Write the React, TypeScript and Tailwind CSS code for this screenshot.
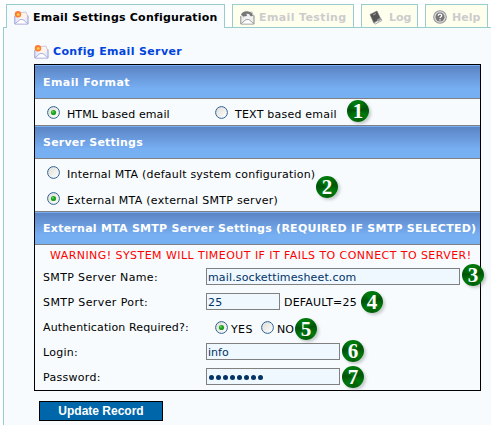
import type { ReactNode } from 'react';

function MailIcon({ muted = false }: { muted?: boolean }) {
  const line = muted ? '#8c8c8c' : '#9a9cd0';
  return (
    <svg width="15" height="15" viewBox="0 0 15 15" className="block shrink-0">
      <path d="M3.500 3l8.500-1 1.500 4v5h-11z" fill={muted ? '#f2f2f2' : '#fdf3ea'} stroke={muted ? '#b5b5b5' : '#c9bcd2'} strokeWidth=".8" />
      <path d="M.8 6.500l5.700 3.800h2L14.200 6v8H1.200z" fill={muted ? '#eeeeee' : '#e6ebfd'} />
      <path d="M.8 6v8h13.200V5.500" fill="none" stroke={line} />
      <path d="M1.200 13.600l4.800-4h3l4.600 4" fill="#ffffff" stroke={line} strokeWidth=".8" />
      {muted ? (
        <path d="M1 5C1.500 1 8 0 11.500 2.800L13 6l-2.500.3L9 4 6.500 3.800 7 6 3.500 6.500z" fill="#777777" />
      ) : (
        <>
          <circle cx="4" cy="4.200" r="3.200" fill="#ff7a33" />
          <circle cx="4.200" cy="4.500" r="1.500" fill="#ffc84a" />
        </>
      )}
    </svg>
  );
}

function BookIcon() {
  return (
    <svg width="14" height="15" viewBox="0 0 14 15" className="block shrink-0">
      <path d="M1 4.500L8 1l3.500 7.500L4.800 13z" fill="#555" stroke="#777" strokeWidth=".6" />
      <path d="M5 13l7-4.500 1 2L6.500 14z" fill="#eee" stroke="#888" strokeWidth=".6" />
      <path d="M8 9.500l3.500-2 1 2-3.500 2.300z" fill="#999" />
      <path d="M4 5l3-1.500" stroke="#aaa" />
    </svg>
  );
}

function HelpIcon() {
  return (
    <svg width="14" height="14" viewBox="0 0 14 14" className="block shrink-0">
      <circle cx="7" cy="7" r="6.300" fill="#ddd" stroke="#999" strokeWidth="1.100" />
      <circle cx="7" cy="7" r="4.500" fill="#777" />
      <path d="M5.200 5.800C5.300 3.600 8.800 3.700 8.700 5.700 8.600 6.700 7 6.800 7 8.100M7 9.200v1.300" fill="none" stroke="#fff" strokeWidth="1.300" />
    </svg>
  );
}

function Radio({ on = false }: { on?: boolean }) {
  return (
    <svg width="13" height="13" viewBox="0 0 13 13" className="block shrink-0" role="radio" aria-checked={on}>
      <defs>
        <linearGradient id="well" x1="0" y1="0" x2="1" y2="1">
          <stop offset="0" stopColor="#dcdcd7" />
          <stop offset="1" stopColor="#ffffff" />
        </linearGradient>
      </defs>
      <circle cx="6.500" cy="6.500" r="5.900" fill="url(#well)" stroke="#316394" strokeWidth="1" />
      {on && <circle cx="6.500" cy="6.500" r="2.600" fill="#21a121" />}
      {on && <circle cx="5.800" cy="5.800" r="1.100" fill="#55d551" />}
    </svg>
  );
}

function Badge({ n, at }: { n: number; at: string }) {
  return (
    <span
      className={`absolute ${at} flex size-[22px] items-center justify-center rounded-full bg-[conic-gradient(from_20deg,#00760c,#005408,#007a0c,#005f08,#00760c,#005408,#007a0c,#00760c)] font-['Liberation_Serif',serif] text-[21px] leading-none font-bold text-white shadow-[2px_2px_3px_rgba(110,110,110,0.35)]`}
    >
      {n}
    </span>
  );
}

function Tab({ className, children }: { className: string; children: ReactNode }) {
  return (
    <div className={`flex h-6 items-center border-[#99cccc] pt-[2px] font-bold whitespace-nowrap ${className}`}>{children}</div>
  );
}

function Header({ className, children }: { className: string; children: ReactNode }) {
  return (
    <div
      className={`w-full border-t border-b border-t-[#78aef4] border-b-[#808080] bg-[linear-gradient(#5b84c4,#77aff3_72%)] pl-2 font-bold whitespace-nowrap text-white ${className}`}
    >
      {children}
    </div>
  );
}

function Field({ className, children }: { className: string; children: ReactNode }) {
  return (
    <div className={`flex h-[17px] items-center border border-[#808080] bg-[#eff7ff] pt-[2px] text-[#003366] ${className}`}>
      {children}
    </div>
  );
}

function Row({ label, tracking, children }: { label: string; tracking: string; children: ReactNode }) {
  return (
    <div className="flex h-[25px] items-center pl-2">
      <div className={`w-[163px] shrink-0 pt-[2px] whitespace-nowrap ${tracking}`}>{label}</div>
      {children}
    </div>
  );
}

export default function App() {
  return (
    <div className="relative h-[425px] w-[491px] overflow-hidden bg-white pt-1 pl-[3px] font-['DejaVu_Sans',Verdana,sans-serif] text-[11px] leading-[15px] text-black">
      <div className="relative z-10 -mb-px flex gap-[7px] pl-[3px]">
        <Tab className="w-[219px] border border-b-0 bg-[#f7fbfd] pl-[7px]">
          <MailIcon />
          <span className="ml-[4px] tracking-[0.22px]">Email Settings Configuration</span>
        </Tab>
        <Tab className="w-[122px] border bg-[#ffffee] pl-[7px] text-[#cccccc]">
          <MailIcon muted />
          <span className="ml-[4px] tracking-[0.38px]">Email Testing</span>
        </Tab>
        <Tab className="w-[57px] border bg-[#ffffee] pl-[7px] text-[#cccccc]">
          <BookIcon />
          <span className="ml-[6px]">Log</span>
        </Tab>
        <Tab className="w-[63px] border bg-[#ffffee] pl-[7px] text-[#cccccc]">
          <HelpIcon />
          <span className="ml-[5px]">Help</span>
        </Tab>
      </div>

      <div className="h-[398px] border-t border-l border-[#99cccc] bg-[#f7fbfd] pl-[30px]">
        <div className="flex h-9 items-center pt-[11px] font-bold whitespace-nowrap text-[#0044dd]">
          <MailIcon />
          <span className="ml-[4px] tracking-[0.35px]">Config Email Server</span>
        </div>

        <div className="h-[327px] w-[447px] border border-black">
          <Header className="h-[34px] pt-[9px] tracking-[0.42px]">Email Format</Header>
          <div className="flex h-[26px] items-center pl-3">
            <Radio on />
            <span className="ml-[7px] w-[148px] pt-[4px] tracking-[0.1px]">HTML based email</span>
            <Radio />
            <span className="ml-[7px] pt-[4px] tracking-[0.22px]">TEXT based email</span>
          </div>
          <div className="h-px bg-[#808080]" />
          <Header className="h-[33px] pt-[8px] tracking-[0.22px]">Server Settings</Header>
          <div className="h-[52px] pl-3">
            <div className="flex h-[26px] items-center">
              <Radio />
              <span className="ml-[7px] pt-[4px] tracking-[0.21px]">Internal MTA (default system configuration)</span>
            </div>
            <div className="flex h-[26px] items-center">
              <Radio on />
              <span className="ml-[7px] pt-[4px] tracking-[0.29px]">External MTA (external SMTP server)</span>
            </div>
          </div>
          <div className="h-px bg-[#808080]" />
          <Header className="h-[33px] pt-[8px] tracking-[0.26px]">External MTA SMTP Server Settings (REQUIRED IF SMTP SELECTED)</Header>
          <div className="h-[19px] pt-[3px] pl-[15px] tracking-[0.44px] whitespace-nowrap text-[#ff0000]">
            WARNING! SYSTEM WILL TIMEOUT IF IT FAILS TO CONNECT TO SERVER!
          </div>
          <Row label="SMTP Server Name:" tracking="tracking-[0.35px]">
            <Field className="w-[254px] pl-px tracking-[0.14px]">mail.sockettimesheet.com</Field>
          </Row>
          <Row label="SMTP Server Port:" tracking="tracking-[0.4px]">
            <Field className="w-[74px] pl-px tracking-[0.2px]">25</Field>
            <span className="ml-[4px] pt-[2px] tracking-[0.2px]">DEFAULT=25</span>
          </Row>
          <Row label="Authentication Required?:" tracking="tracking-[0.12px]">
            <span className="ml-[9px] pt-px"><Radio on /></span>
            <span className="ml-[3px] w-[30px] pt-[5px] tracking-[0.4px]">YES</span>
            <span className="pt-px"><Radio /></span>
            <span className="ml-[3px] pt-[5px]">NO</span>
          </Row>
          <Row label="Login:" tracking="tracking-[0.25px]">
            <Field className="w-[134px] pl-px">info</Field>
          </Row>
          <Row label="Password:" tracking="tracking-[0.3px]">
            <Field className="w-[134px] gap-[2px] pl-[2px]">
              {Array.from({ length: 8 }, (_, i) => (
                <span key={i} className="size-[5px] rounded-full bg-[#003366]" />
              ))}
            </Field>
          </Row>
        </div>

        <button className="mt-[10px] ml-[5px] block h-[20px] w-[124px] border border-black bg-[#0066aa] text-center font-['Liberation_Sans',Arial,sans-serif] text-[12px] leading-[18px] font-bold text-white">
          Update Record
        </button>
      </div>

      <Badge n={1} at="left-[347px] top-[100px]" />
      <Badge n={2} at="left-[316px] top-[176px]" />
      <Badge n={3} at="left-[462px] top-[264px]" />
      <Badge n={4} at="left-[361px] top-[291px]" />
      <Badge n={5} at="left-[295px] top-[318px]" />
      <Badge n={6} at="left-[342px] top-[340px]" />
      <Badge n={7} at="left-[342px] top-[366px]" />
    </div>
  );
}
